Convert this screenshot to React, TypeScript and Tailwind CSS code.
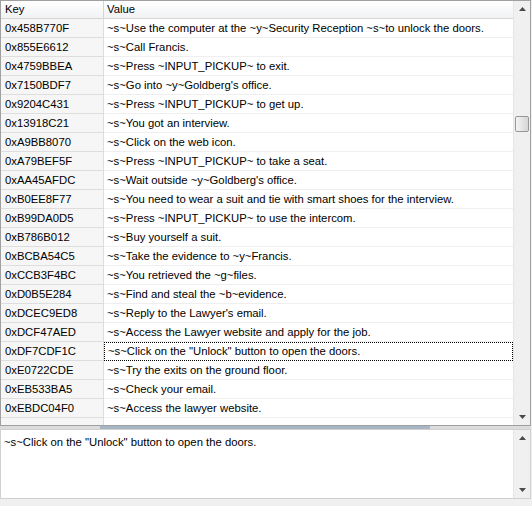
import React from "react";

type Row = { key: string; value: string };

const rows: Row[] = [
  { key: "0x458B770F", value: "~s~Use the computer at the ~y~Security Reception ~s~to unlock the doors." },
  { key: "0x855E6612", value: "~s~Call Francis." },
  { key: "0x4759BBEA", value: "~s~Press ~INPUT_PICKUP~ to exit." },
  { key: "0x7150BDF7", value: "~s~Go into ~y~Goldberg's office." },
  { key: "0x9204C431", value: "~s~Press ~INPUT_PICKUP~ to get up." },
  { key: "0x13918C21", value: "~s~You got an interview." },
  { key: "0xA9BB8070", value: "~s~Click on the web icon." },
  { key: "0xA79BEF5F", value: "~s~Press ~INPUT_PICKUP~ to take a seat." },
  { key: "0xAA45AFDC", value: "~s~Wait outside ~y~Goldberg's office." },
  { key: "0xB0EE8F77", value: "~s~You need to wear a suit and tie with smart shoes for the interview." },
  { key: "0xB99DA0D5", value: "~s~Press ~INPUT_PICKUP~ to use the intercom." },
  { key: "0xB786B012", value: "~s~Buy yourself a suit." },
  { key: "0xBCBA54C5", value: "~s~Take the evidence to ~y~Francis." },
  { key: "0xCCB3F4BC", value: "~s~You retrieved the ~g~files." },
  { key: "0xD0B5E284", value: "~s~Find and steal the ~b~evidence." },
  { key: "0xDCEC9ED8", value: "~s~Reply to the Lawyer's email." },
  { key: "0xDCF47AED", value: "~s~Access the Lawyer website and apply for the job." },
  { key: "0xDF7CDF1C", value: '~s~Click on the "Unlock" button to open the doors.' },
  { key: "0xE0722CDE", value: "~s~Try the exits on the ground floor." },
  { key: "0xEB533BA5", value: "~s~Check your email." },
  { key: "0xEBDC04F0", value: "~s~Access the lawyer website." },
  { key: "", value: "" },
];

const SELECTED = "0xDF7CDF1C";

function Arrow({ up }: { up: boolean }) {
  return (
    <svg width="7" height="4" viewBox="0 0 7 4">
      {up ? (
        <path d="M3.5 0 L7 4 L0 4 Z" fill="#4a4a4a" />
      ) : (
        <path d="M0 0 L7 0 L3.5 4 Z" fill="#4a4a4a" />
      )}
    </svg>
  );
}

function ScrollBar({ thumbTop }: { thumbTop?: number }) {
  return (
    <div className="relative w-[17px] h-full bg-[#f0f0f0] border-l border-[#e6e6e6] flex flex-col items-center justify-between py-[6px]">
      <Arrow up />
      {thumbTop !== undefined && (
        <div
          className="absolute left-[1px] w-[14px] h-[16px] rounded-[2px] border border-[#979797] bg-gradient-to-r from-[#f4f4f4] to-[#d6d6d6]"
          style={{ top: thumbTop }}
        />
      )}
      <Arrow up={false} />
    </div>
  );
}

export default function App() {
  return (
    <div
      className="w-[532px] h-[506px] bg-[#f0f0f0] text-[11.3px] text-black overflow-hidden flex flex-col"
      style={{ fontFamily: '"Liberation Sans", Arial, sans-serif' }}
    >
      {/* Grid */}
      <div className="w-[531px] h-[426px] border border-[#a0a0a0] bg-white flex">
        <div className="flex-1 overflow-hidden">
          {/* Header */}
          <div className="flex h-[18px] border-b border-[#d5d5d5] bg-gradient-to-b from-white to-[#f1f2f4]">
            <div className="w-[103px] pl-[4px] border-r border-[#d5d5d5] flex items-center">Key</div>
            <div className="flex-1 pl-[3px] flex items-center">Value</div>
          </div>
          {rows.map((r, i) => (
            <div key={i} className="flex h-[19px]">
              <div className="w-[103px] pl-[4px] bg-[#f6f6f6] border-r border-b border-[#dedede] flex items-center">
                {r.key}
              </div>
              <div
                className={`flex-1 pl-[3px] flex items-center whitespace-nowrap border-b ${
                  r.key === SELECTED
                    ? "border border-dotted border-black"
                    : "border-[#efefef]"
                }`}
              >
                {r.value}
              </div>
            </div>
          ))}
        </div>
        <ScrollBar thumbTop={115} />
      </div>

      {/* Splitter */}
      <div className="h-[3px] w-[531px] flex">
        <div className="w-[100px] bg-[#dcdcdc]" />
        <div className="w-[330px] bg-[#a6b6c4]" />
        <div className="flex-1 bg-[#dcdcdc]" />
      </div>

      {/* Text box */}
      <div className="w-[531px] h-[70px] border border-[#d0d0d0] bg-white flex">
        <div className="flex-1 pl-[3px] pt-[4px]">~s~Click on the "Unlock" button to open the doors.</div>
        <ScrollBar />
      </div>
    </div>
  );
}
